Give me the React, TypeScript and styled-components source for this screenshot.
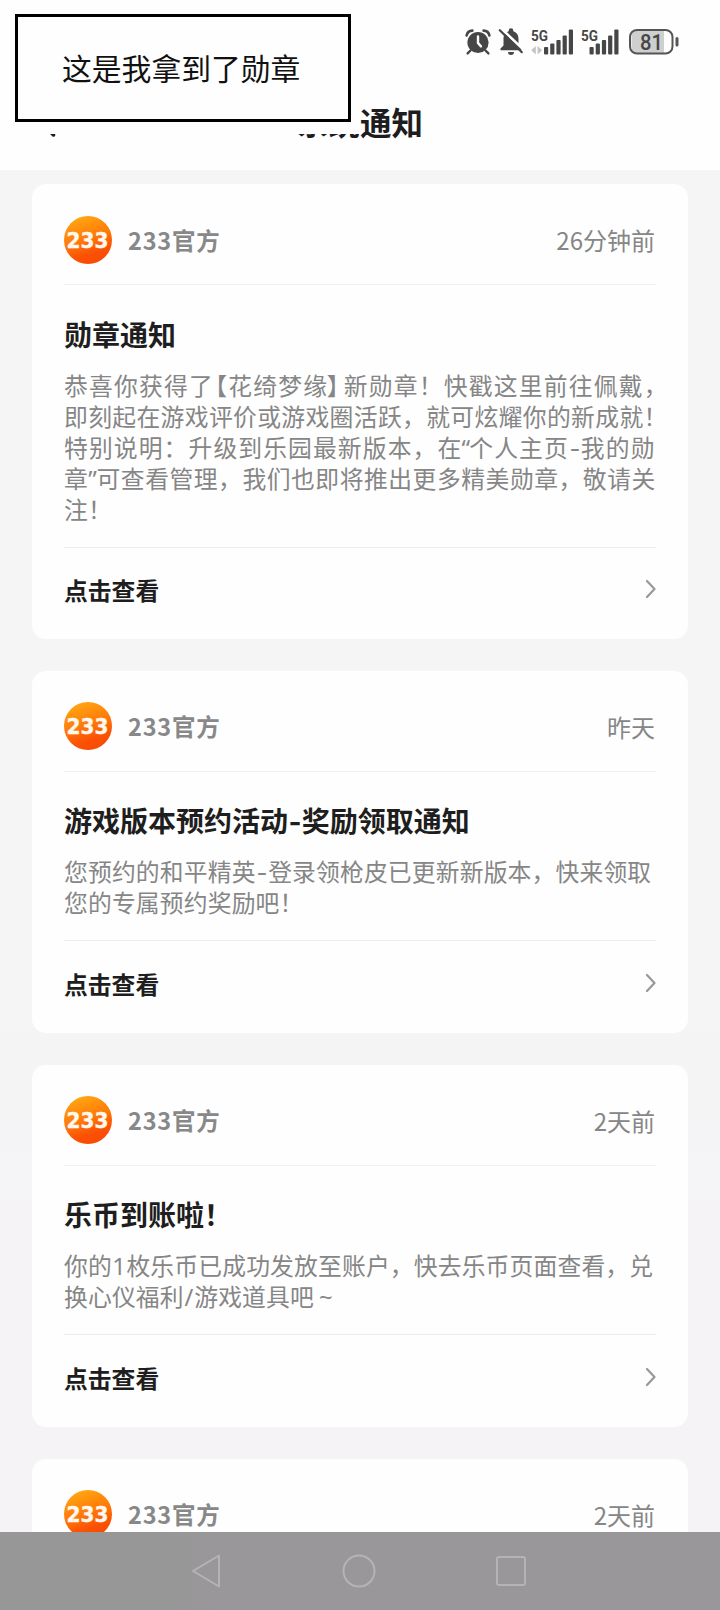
import React from "react";
import styled, { createGlobalStyle } from "styled-components";

const GlobalStyle = createGlobalStyle`
  * { box-sizing: border-box; }
  body {
    margin: 0;
    background: #f5f5f5;
    font-family: "Noto Sans CJK SC", sans-serif;
  }
`;

const Screen = styled.div`
  position: relative;
  display: flex;
  flex-direction: column;
  width: 720px;
  height: 1610px;
  overflow: hidden;
  background: linear-gradient(180deg, #f5f5f5 60%, #f5f3f6 80%);
`;

const Header = styled.header`
  flex: none;
  height: 170px;
  display: flex;
  flex-direction: column;
  background: #fefefe;
`;

const StatusBar = styled.div`
  height: 84px;
  display: flex;
  justify-content: flex-end;
  align-items: flex-start;
  gap: 7px;
  padding: 26px 41.5px 0 0;
`;

const TitleBar = styled.div`
  height: 74px;
  display: flex;
  align-items: center;
  justify-content: center;
  position: relative;
`;

const BackIcon = styled.svg`
  position: absolute;
  left: 38px;
  top: 26px;
`;

const PageTitle = styled.h1`
  margin: 0;
  font-size: 31.5px;
  line-height: 40px;
  font-weight: 700;
  color: #1d1d1f;
`;

const NoteCover = styled.div`
  position: absolute;
  left: 0;
  top: 0;
  width: 360px;
  height: 134px;
  padding: 14px 0 0 15px;
  background: #fefefe;
`;

const NoteBox = styled.div`
  width: 336px;
  height: 108px;
  border: 3px solid #000;
  display: flex;
  align-items: center;
  padding: 0 0 3px 44px;
  font-size: 29.8px;
  line-height: 40px;
  color: #111;
  white-space: nowrap;
`;

const List = styled.main`
  flex: 1;
  min-height: 0;
  overflow: hidden;
  display: flex;
  flex-direction: column;
  gap: 32.2px;
  padding: 14px 32px 0;
`;

const Card = styled.article`
  flex: none;
  background: #fefefe;
  border-radius: 14px;
  padding: 0 32px;
`;

const CardHead = styled.div`
  height: 101px;
  display: flex;
  align-items: center;
  padding: 20px 1px 9px 0;
  border-bottom: 1px solid #f0f0f0;
`;

const Sender = styled.span`
  margin-left: 16px;
  flex: 1;
  font-size: 23.5px;
  font-weight: 700;
  letter-spacing: 0.8px;
  color: #888;
`;

const Time = styled.time`
  font-size: 24px;
  color: #868686;
`;

const CardTitle = styled.h2`
  margin: 28.5px 0 15px;
  font-size: 28px;
  line-height: 40px;
  font-weight: 700;
  color: #1e1e20;
  white-space: nowrap;
`;

const Body = styled.div`
  font-size: 23.8px;
  color: #868686;
  padding-bottom: 23px;
  border-bottom: 1px solid #ececee;
`;

const Line = styled.p<{ $pitch: number }>`
  margin: 0;
  height: 31px;
  line-height: 31px;
  white-space: nowrap;
  letter-spacing: ${(p) => p.$pitch - 23.8}px;
`;

const Glyph = styled.span<{ $before: number; $after: number; $wide: boolean }>`
  margin-left: ${(p) => p.$before}px;
  margin-right: ${(p) => p.$after}px;
  letter-spacing: 0;
  font-feature-settings: "halt";
  font-family: ${(p) => (p.$wide ? "Inter" : '"Noto Sans"')}, "Noto Sans CJK SC", sans-serif;
  line-height: 1;
`;

const Action = styled.div`
  height: 91.3px;
  display: flex;
  align-items: center;
  justify-content: space-between;
  padding-bottom: 7.6px;
  font-size: 23.8px;
  font-weight: 700;
  color: #1e1e20;
`;

const Chevron = styled.svg`
  margin: 0;
`;

const BatteryIcon = styled.svg`
  margin-left: 2.5px;
`;

const NavBar = styled.nav`
  flex: none;
  height: 78px;
  display: flex;
  justify-content: center;
  align-items: center;
  gap: 119px;
  padding-right: 2px;
  background: linear-gradient(90deg, #979797 15%, #999799 30%);
`;

// A plain run of text, or one glyph with the space before and after it.
type Piece = string | [string, number, number];
interface TextLine {
  pitch: number;
  pieces: Piece[];
}
interface Notice {
  time: string;
  title?: Piece[];
  lines?: TextLine[];
}

const notices: Notice[] = [
  {
    time: "26分钟前",
    title: ["勋章通知"],
    lines: [
      { pitch: 25, pieces: ["恭喜你获得了", ["【", 1.2, 1.2], "花绮梦缘", ["】", -1.5, 5], "新勋章！快戳这里前往佩戴，"] },
      { pitch: 24.15, pieces: ["即刻起在游戏评价或游戏圈活跃，就可炫耀你的新成就！"] },
      { pitch: 24.9, pieces: ["特别说明：升级到乐园最新版本，在", ["“", -0.8, -0.8], "个人主页", ["-", 0.5, 0.5], "我的勋"] },
      { pitch: 24.32, pieces: ["章", ["”", -0.2, -0.2], "可查看管理，我们也即将推出更多精美勋章，敬请关"] },
      { pitch: 23.9, pieces: ["注！"] },
    ],
  },
  {
    time: "昨天",
    title: ["游戏版本预约活动", ["-", 0.5, 0], "奖励领取通知"],
    lines: [
      { pitch: 23.95, pieces: ["您预约的和平精英", ["-", 0.8, 0.8], "登录领枪皮已更新新版本，快来领取"] },
      { pitch: 23.95, pieces: ["您的专属预约奖励吧！"] },
    ],
  },
  {
    time: "2天前",
    title: ["乐币到账啦！"],
    lines: [
      { pitch: 23.95, pieces: ["你的", ["1", 0.4, 0.5], "枚乐币已成功发放至账户，快去乐币页面查看，兑"] },
      { pitch: 23.95, pieces: ["换心仪福利", ["/", 0.8, 0.8], "游戏道具吧", ["~", 5, 5]] },
    ],
  },
  { time: "2天前" },
];

const renderPieces = (pieces: Piece[]) =>
  pieces.map((p, i) =>
    typeof p === "string" ? (
      <React.Fragment key={i}>{p}</React.Fragment>
    ) : (
      <Glyph key={i} $before={p[1]} $after={p[2]} $wide={p[0] === "-"}>{p[0]}</Glyph>
    )
  );

const Avatar = ({ id }: { id: string }) => (
  <svg width="48" height="48" viewBox="0 0 48 48">
    <defs>
      <linearGradient id={id} x1="0.2" y1="0" x2="0.55" y2="1">
        <stop offset="0" stopColor="#ffab12" />
        <stop offset="0.5" stopColor="#ff7a0a" />
        <stop offset="0.8" stopColor="#fb5205" />
        <stop offset="1" stopColor="#f84a04" />
      </linearGradient>
    </defs>
    <circle cx="24" cy="24" r="24" fill={`url(#${id})`} />
    <text
      x="2.5"
      y="31.5"
      fontFamily="DejaVu Sans, sans-serif"
      fontWeight="700"
      fontSize="20.5"
      textLength="42"
      lengthAdjust="spacingAndGlyphs"
      fill="#fff8ee"
      stroke="#fff8ee"
      strokeWidth="0.4"
    >
      233
    </text>
  </svg>
);

const INK = "#464646";

const Alarm = () => (
  <svg width="26" height="30" viewBox="0 0 26 30">
    <circle cx="13" cy="16.5" r="10.6" fill={INK} />
    <path d="M1.6 9.5A6 6 0 0 1 7.4 4.6M24.4 9.5A6 6 0 0 0 18.6 4.6" fill="none" stroke={INK} strokeWidth="2.6" strokeLinecap="round" />
    <path d="M5.5 24.5 2.6 27.4M20.5 24.5l2.9 2.9" stroke={INK} strokeWidth="2.4" strokeLinecap="round" />
    <path d="M13 10.5v6.5l3 3.4" fill="none" stroke="#fff" strokeWidth="2.4" strokeLinecap="round" />
  </svg>
);

const BellOff = () => (
  <svg width="26" height="30" viewBox="0 0 26 30">
    <path
      d="M2.5 24.2v-1.6l3-3V13c0-4.5 2.3-7 5.2-7.8V4.6a2.3 2.3 0 0 1 4.6 0v.6c2.9.8 5.2 3.3 5.2 7.8v6.6l3 3v1.6z"
      fill={INK}
    />
    <path d="M10 26h6a3 3 0 0 1-6 0z" fill={INK} />
    <path d="M3.5 2.8 26.5 24.5" stroke="#fefefe" strokeWidth="2.6" />
    <path d="M1.8 4.2 23.8 26.2" stroke={INK} strokeWidth="2.2" strokeLinecap="round" />
  </svg>
);

const Signal = ({ offset, arrows }: { offset: number; arrows?: boolean }) => (
  <svg width={offset + 30} height="30" viewBox={`0 0 ${offset + 30} 30`}>
    <text x="0" y="15.2" fontFamily="Roboto, sans-serif" fontWeight="700" fontSize="15.5" textLength="17" lengthAdjust="spacingAndGlyphs" fill={INK}>
      5G
    </text>
    {arrows && <path d="M4.8 20v8.5L.2 24.25zM6.6 20v8.5l4.6-4.25z" fill="#c4c4c4" />}
    {[7.5, 11, 14.5, 19, 25.2].map((h, i) => (
      <rect key={i} x={offset + i * 6.2} y={28.6 - h} width="4.2" height={h} rx="1" fill={INK} />
    ))}
  </svg>
);

const Battery = () => (
  <BatteryIcon width="50" height="30" viewBox="0 0 50 30">
    <path d="M8.5 4.5H35v23H8.5a6 6 0 0 1-6-6v-11a6 6 0 0 1 6-6z" fill="#cfcfcf" />
    <rect x="1" y="4" width="42.5" height="23.5" rx="7" fill="none" stroke="#555" strokeWidth="2" />
    <rect x="46.5" y="11" width="3" height="9.5" rx="1.5" fill="#555" />
    <text x="11" y="23.8" fontFamily="Roboto, sans-serif" fontWeight="500" fontSize="22.5" textLength="23" lengthAdjust="spacingAndGlyphs" fill={INK}>
      81
    </text>
  </BatteryIcon>
);

export default function App() {
  return (
    <>
      <GlobalStyle />
      <Screen lang="zh-CN">
        <Header>
          <StatusBar>
            <Alarm />
            <BellOff />
            <Signal offset={13} arrows />
            <Signal offset={8.5} />
            <Battery />
          </StatusBar>
          <TitleBar>
            <BackIcon width="20" height="28" viewBox="0 0 20 28">
              <path d="M15.5 2 4 13.5 15.5 25" fill="none" stroke="#1d1d1f" strokeWidth="3.5" strokeLinecap="round" />
            </BackIcon>
            <PageTitle>系统通知</PageTitle>
          </TitleBar>
        </Header>
        <List>
          {notices.map((n, i) => (
            <Card key={i}>
              <CardHead>
                <Avatar id={`avatar${i}`} />
                <Sender>233官方</Sender>
                <Time>{n.time}</Time>
              </CardHead>
              {n.title && <CardTitle>{renderPieces(n.title)}</CardTitle>}
              {n.lines && (
                <>
                  <Body>
                    {n.lines.map((l, j) => (
                      <Line key={j} $pitch={l.pitch}>{renderPieces(l.pieces)}</Line>
                    ))}
                  </Body>
                  <Action>
                    点击查看
                    <Chevron width="11" height="20" viewBox="0 0 11 20" fill="none">
                      <path d="M2 2 9.5 10 2 18" stroke="#999" strokeWidth="2.2" strokeLinecap="round" strokeLinejoin="round" />
                    </Chevron>
                  </Action>
                </>
              )}
            </Card>
          ))}
        </List>
        <NavBar>
          <svg width="32" height="36" viewBox="0 0 32 36" fill="none">
            <path d="M28 2.5v31L2 18z" stroke="#b5b4b5" strokeWidth="2" strokeLinejoin="round" />
          </svg>
          <svg width="34" height="34" viewBox="0 0 34 34" fill="none">
            <circle cx="17" cy="17" r="15.5" stroke="#b5b4b5" strokeWidth="2" />
          </svg>
          <svg width="32" height="32" viewBox="0 0 32 32" fill="none">
            <rect x="2" y="2" width="28" height="28" rx="2" stroke="#b5b4b5" strokeWidth="2" />
          </svg>
        </NavBar>
        <NoteCover>
          <NoteBox>这是我拿到了勋章</NoteBox>
        </NoteCover>
      </Screen>
    </>
  );
}
